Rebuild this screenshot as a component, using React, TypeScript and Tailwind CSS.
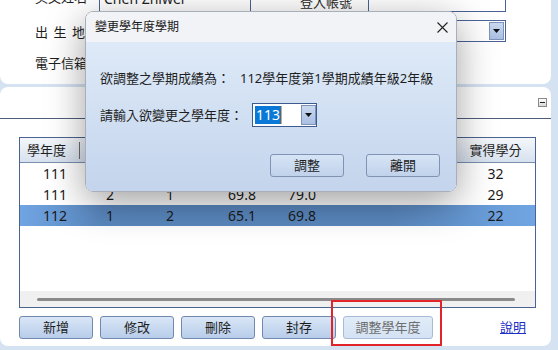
import React from "react";

const rows = [
  { y: "111", s: "", g: "", a: "", b: "", c: "32", sel: false },
  { y: "111", s: "2", g: "1", a: "69.8", b: "79.0", c: "29", sel: false },
  { y: "112", s: "1", g: "2", a: "65.1", b: "69.8", c: "22", sel: true },
];

function Tri() {
  return (
    <svg width="7" height="4" viewBox="0 0 7 4">
      <polygon points="0,0 7,0 3.5,4" fill="#111" />
    </svg>
  );
}

function PageBtn({ label, wide, disabled }: { label: string; wide?: boolean; disabled?: boolean }) {
  return (
    <div
      className={
        (wide ? "w-[90px] " : "w-[74px] ") +
        (disabled
          ? "bg-[linear-gradient(#e2ecf8,#d3e2f4)] border-[#a6bcd9] text-[#6e6e6e] "
          : "bg-[linear-gradient(#d9e6f6,#b8cdea)] border-[#7189b0] text-[#1e1e1e] ") +
        "h-[23px] border rounded-[3px] flex items-center justify-center text-[13px] leading-none"
      }
    >
      {label}
    </div>
  );
}

export default function App() {
  return (
    <div className="relative w-[558px] h-[350px] overflow-hidden bg-[#d5e2f2] text-[13px] text-[#1e1e1e] font-['Noto_Sans','Noto_Sans_CJK_TC',sans-serif]">
      {/* top panel */}
      <div className="w-[551px] h-[84px] bg-white rounded-b-[8px] overflow-hidden">
        <div className="-mt-[12px] flex flex-col gap-[7px]">
          <div className="flex items-center h-[24px]">
            <div className="w-[99px] pl-[35px] leading-none pb-[6px]">英文姓名</div>
            <div className="w-[152px] h-full border border-[#4a6396] px-[4px] flex items-center text-[14px] leading-none pb-[3px]">
              Chen Zhiwei
            </div>
            <div className="w-[117px] text-right pr-[16px] leading-none pt-[4px]">登入帳號</div>
            <div className="w-[138px] h-full border border-[#4a6396]" />
          </div>
          <div className="flex items-center h-[24px]">
            <div className="w-[99px] pl-[35px] tracking-[5.5px] leading-none pt-[2px]">出生地</div>
            <div className="w-[407px] h-[22px] border border-[#4a6396] flex items-center justify-end pr-[1px]">
              <div className="w-[15px] h-[18px] border border-[#7d93b8] bg-[linear-gradient(#c9d9ef,#a9c0e3)] flex items-center justify-center">
                <Tri />
              </div>
            </div>
          </div>
          <div className="flex items-center h-[24px]">
            <div className="w-[99px] pl-[35px] leading-none pt-[2px]">電子信箱</div>
          </div>
        </div>
      </div>

      {/* main panel */}
      <div className="mt-[3px] w-[551px] h-[259px] bg-white rounded-[8px] flex flex-col">
        <div className="h-[32px] border-b border-[#4d5d7c] flex items-center justify-end pr-[4px]">
          <div className="w-[9px] h-[9px] border border-[#8a8a8a] bg-[linear-gradient(#ffffff,#d8d8d8)] flex items-center justify-center">
            <div className="w-[5px] h-px bg-[#222]" />
          </div>
        </div>

        <div className="mt-[18px] ml-[19px] w-[517px] h-[171px] border border-[#4b6390] flex flex-col">
          <div className="h-[25px] border-b border-[#7a8fb0] bg-[linear-gradient(#f4f7fb,#d7e1ef)] grid grid-cols-[60px_60px_60px_84px_36px_136px_79px] text-[13px]">
            <div className="flex items-center justify-end">
              <span className="pr-[13px] leading-none">學年度</span>
              <span className="w-px h-[17px] bg-[#6b6b6b]" />
            </div>
            <div />
            <div />
            <div />
            <div />
            <div />
            <div className="flex items-center justify-center leading-none">實得學分</div>
          </div>
          {rows.map((r, i) => (
            <div
              key={i}
              className={
                (r.sel
                  ? "bg-[linear-gradient(90deg,#70a4e2_0%,#5a88bf_16%,#5a88bf_72%,#70a5e3_100%)] "
                  : "bg-white ") +
                "h-[21px] grid grid-cols-[60px_60px_60px_84px_36px_136px_79px] items-center text-[14px] leading-none text-[#1a1a1a]"
              }
            >
              <div className="text-right pr-[13px]">{r.y}</div>
              <div className="text-center">{r.s}</div>
              <div className="text-center">{r.g}</div>
              <div className="text-center">{r.a}</div>
              <div className="text-center">{r.b}</div>
              <div />
              <div className="text-center">{r.c}</div>
            </div>
          ))}
          <div className="flex-1 bg-white" />
          <div className="h-[16px] bg-[#f0f0f0] flex items-center">
            <div className="ml-[17px] mr-[20px] flex-1 h-[3px] bg-[#8a8a8a] rounded-full" />
          </div>
        </div>

        <div className="mt-[8px] ml-[19px] w-[517px] flex items-center gap-[7px]">
          <PageBtn label="新增" />
          <PageBtn label="修改" />
          <PageBtn label="刪除" />
          <PageBtn label="封存" />
          <PageBtn label="調整學年度" wide disabled />
          <span className="ml-auto mr-[10px] text-[#1c2fc4] underline leading-none">說明</span>
        </div>
      </div>

      {/* highlight box */}
      <div className="absolute left-[331px] top-[300px] w-[111px] h-[46px] border-2 border-[#e2242a]" />

      {/* dialog */}
      <div className="absolute left-[85px] top-[11px] w-[372px] h-[181px] rounded-[8px] border border-[#a9afb8] overflow-hidden flex flex-col shadow-[0_10px_38px_rgba(0,0,0,0.38)]">
        <div className="h-[30px] bg-[#f2f3f7] flex items-center justify-between pl-[9px] pr-[8px]">
          <span className="text-[12px] leading-none text-[#1a1a1a]">變更學年度學期</span>
          <svg width="11" height="11" viewBox="0 0 11 11">
            <path d="M0.5 0.5 L10.5 10.5 M10.5 0.5 L0.5 10.5" stroke="#222" strokeWidth="1.1" />
          </svg>
        </div>
        <div className="flex-1 bg-[linear-gradient(#deeaf8,#c3d4ec)] pl-[14px] pr-[16px] pt-[27px] flex flex-col">
          <div className="flex items-center h-[18px] leading-none">
            <span className="w-[140px]">欲調整之學期成績為：</span>
            <span>112學年度第1學期成績年級2年級</span>
          </div>
          <div className="mt-[16px] flex items-center h-[24px]">
            <span className="w-[152px] leading-none">請輸入欲變更之學年度：</span>
            <div className="w-[65px] h-[24px] border border-[#3b5a8f] bg-white flex items-center justify-between pl-[2px]">
              <div className="flex items-center h-[18px]">
                <span className="h-[18px] px-[1px] bg-[#0a78d7] text-white text-[14px] leading-[18px]">113</span>
                <span className="w-px h-[18px] bg-[#f0a050]" />
              </div>
              <div className="w-[15px] h-[20px] border border-[#7d93b8] bg-[linear-gradient(#c9d9ef,#a9c0e3)] flex items-center justify-center">
                <Tri />
              </div>
            </div>
          </div>
          <div className="mt-[27px] flex justify-end gap-[22px]">
            <div className="w-[74px] h-[23px] border border-[#8093b3] rounded-[3px] bg-[linear-gradient(#d6e4f5,#c0d2eb)] flex items-center justify-center leading-none">調整</div>
            <div className="w-[74px] h-[23px] border border-[#8093b3] rounded-[3px] bg-[linear-gradient(#d6e4f5,#c0d2eb)] flex items-center justify-center leading-none">離開</div>
          </div>
        </div>
      </div>
    </div>
  );
}
